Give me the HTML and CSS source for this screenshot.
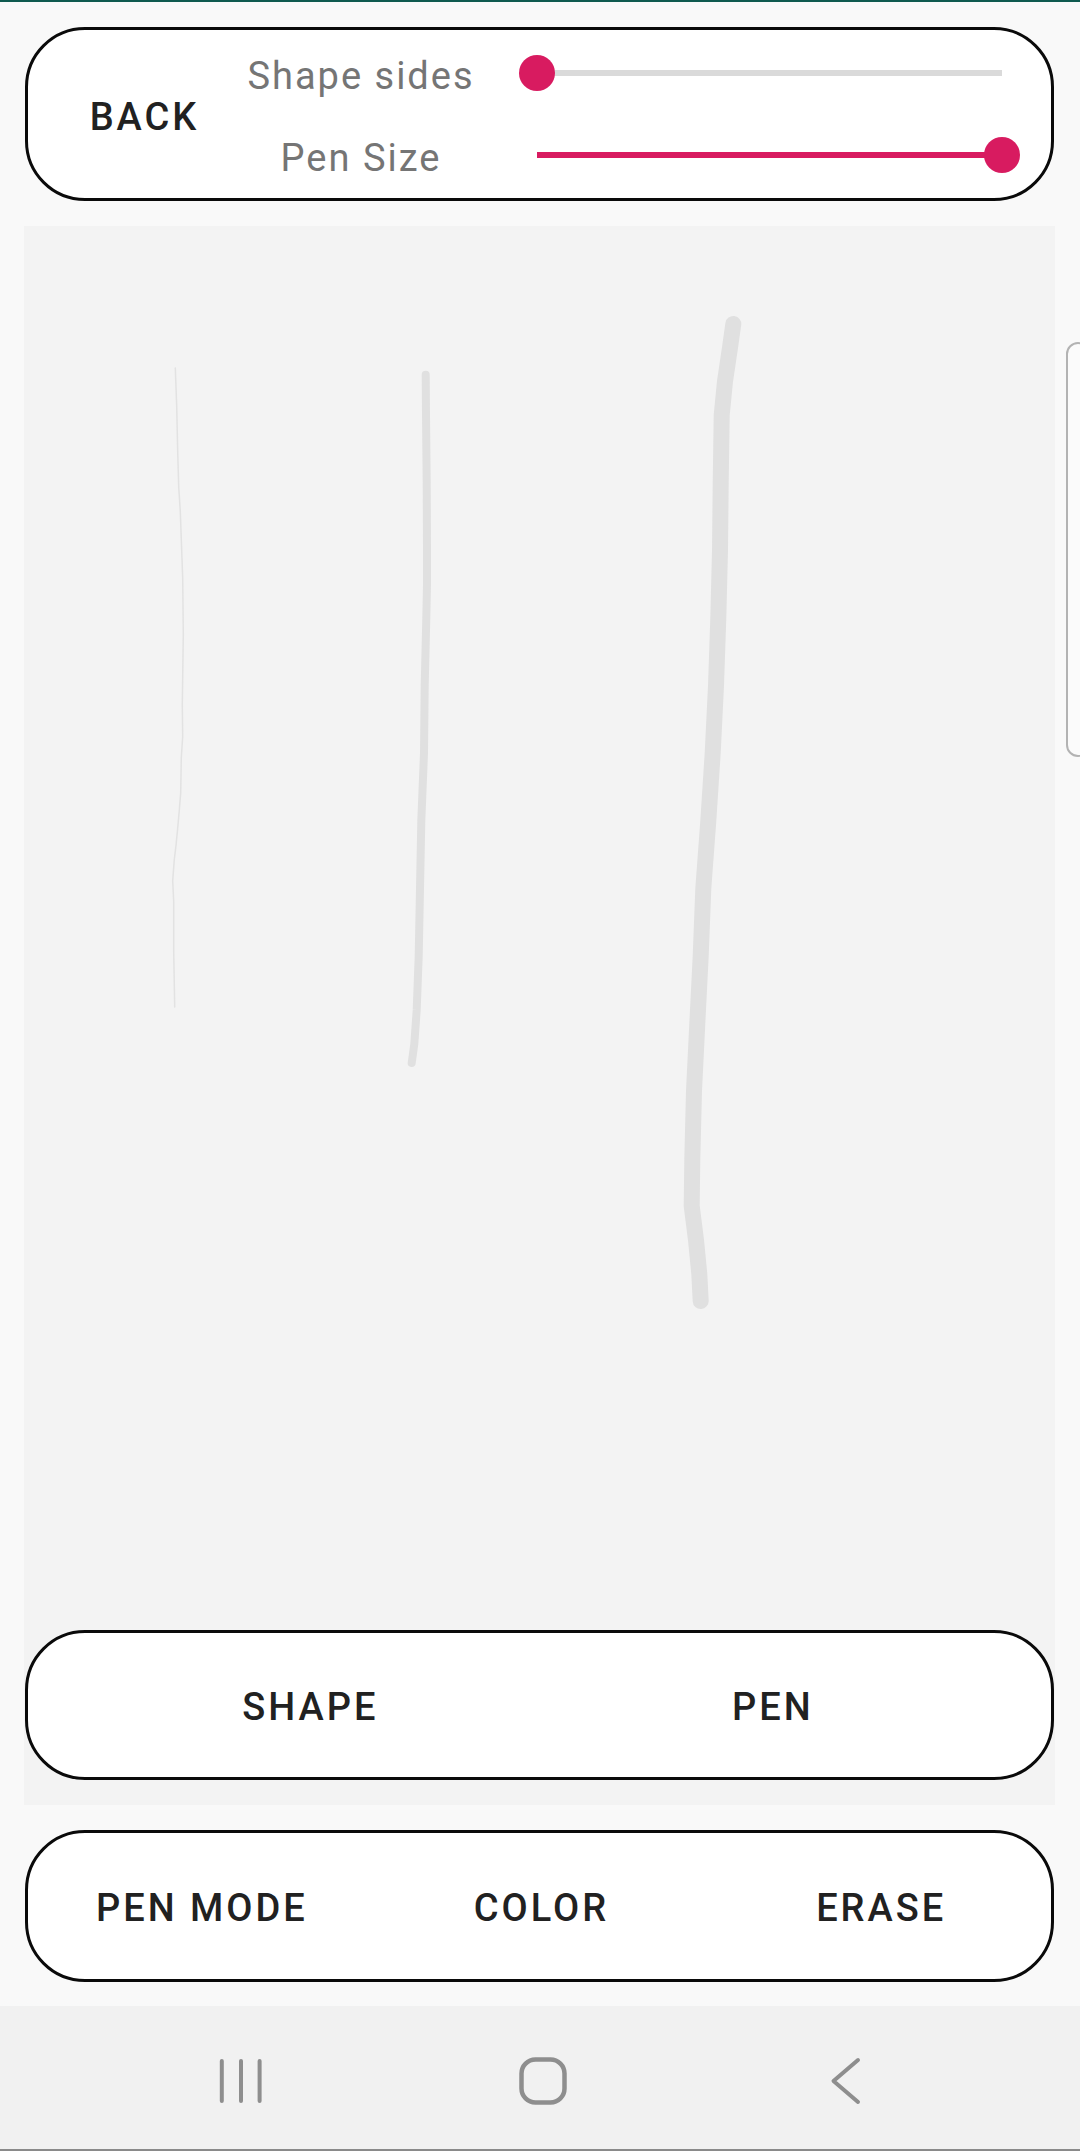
FILE: index.html
```html
<!DOCTYPE html>
<html lang="en">
<head>
<meta charset="utf-8">
<title>Draw</title>
<link rel="stylesheet" href="styles.css">
</head>
<body>
<div class="statusbar"></div>
<main class="app">
  <section class="card top-card">
    <div class="btn back-btn">BACK</div>
    <div class="controls">
      <div class="control-row">
        <div class="label">Shape sides</div>
        <div class="slider">
          <div class="track">
            <div class="fill" style="width:0%"></div>
            <div class="thumb" style="left:0%"></div>
          </div>
        </div>
      </div>
      <div class="control-row">
        <div class="label">Pen Size</div>
        <div class="slider">
          <div class="track">
            <div class="fill" style="width:100%"></div>
            <div class="thumb" style="left:100%"></div>
          </div>
        </div>
      </div>
    </div>
  </section>

  <section class="canvas">
    <svg class="strokes" viewBox="24 226 1031 1579" width="1031" height="1579" aria-hidden="true">
      <polyline class="s1" points="175.3,368 176.7,406 177.7,451.7 178.7,486.8 180.3,511.5 181.3,539.6 182.7,578 183.3,634.5 182.3,704.8 182.7,736.5 181.3,757.6 180.7,792.7 179.3,810.3 177.7,828 176,845.5 174.3,859.5 172.7,880.6 173.7,901.7 173.7,951 174.7,1007"/>
      <polyline class="s2" points="425.7,374.7 426,415 426.7,482.8 427,550.5 427,584 426.3,618 424.7,685.7 424,753 421.3,821 420,888.5 418.7,956 416.7,1010 414.3,1044 411.7,1063"/>
      <polyline class="s3" points="733.3,324 730,347.6 725,381.4 721.7,415 720.7,482.8 720,550.5 718.3,618 716,685.7 712.7,753 708.3,821 703.3,888.5 700.7,956 697.3,1023.7 694,1091 692.3,1159 691.7,1206 696,1240 699.3,1274 700.7,1301"/>
    </svg>
    <div class="card mode-card">
      <div class="btn">SHAPE</div>
      <div class="btn">PEN</div>
    </div>
  </section>

  <section class="card tools-card">
    <div class="btn">PEN MODE</div>
    <div class="btn">COLOR</div>
    <div class="btn">ERASE</div>
  </section>
</main>

<div class="edge-handle"></div>

<nav class="navbar">
  <svg class="nav-icon" viewBox="0 0 60 60" width="60" height="60" aria-hidden="true">
    <line x1="10.8" y1="10" x2="10.8" y2="50"/>
    <line x1="30" y1="10" x2="30" y2="50"/>
    <line x1="48.6" y1="10" x2="48.6" y2="50"/>
  </svg>
  <svg class="nav-icon" viewBox="0 0 60 60" width="60" height="60" aria-hidden="true">
    <rect x="8.5" y="8.5" width="43" height="43" rx="14" ry="14"/>
  </svg>
  <svg class="nav-icon" viewBox="0 0 60 60" width="60" height="60" aria-hidden="true">
    <polyline points="43,9 18.5,30 43,51"/>
  </svg>
</nav>
</body>
</html>
```

FILE: styles.css
```css
* {
  box-sizing: border-box;
}

html, body {
  margin: 0;
  padding: 0;
}

body {
  width: 1080px;
  height: 2151px;
  background: #f9f9f9;
  font-family: Roboto, "Liberation Sans", sans-serif;
  position: relative;
  overflow: hidden;
}

.statusbar {
  height: 2px;
  background: #0f5a4f;
}

.app {
  padding: 25px 25px 0 24px;
  display: flex;
  flex-direction: column;
}

.card {
  background: #ffffff;
  border: 3px solid #0a0a0a;
  border-radius: 60px;
}

.btn {
  font-weight: 500;
  font-size: 38px;
  letter-spacing: 3px;
  color: #212121;
  display: flex;
  align-items: center;
  justify-content: center;
  white-space: nowrap;
}

/* top card */
.top-card {
  margin: 0 1px;
  height: 174px;
  display: flex;
}

.back-btn {
  width: 238px;
  flex: none;
  padding: 6px 5px 0 0;
}

.controls {
  display: flex;
  flex-direction: column;
  gap: 22px;
  padding: 13px 0;
}

.control-row {
  height: 60px;
  display: flex;
  align-items: center;
}

.label {
  width: 190px;
  flex: none;
  display: flex;
  justify-content: center;
  white-space: nowrap;
  font-size: 38px;
  letter-spacing: 2px;
  color: #757575;
  padding-top: 6px;
}

.slider {
  width: 501px;
  margin-left: 63px;
  padding: 0 18px;
  height: 60px;
  display: flex;
  align-items: center;
}

.track {
  position: relative;
  width: 100%;
  height: 6px;
  background: #dadada;
}

.fill {
  height: 100%;
  background: #d81b60;
}

.thumb {
  position: absolute;
  top: 50%;
  width: 36px;
  height: 36px;
  border-radius: 50%;
  background: #d81b60;
  transform: translate(-50%, -50%);
}

/* canvas */
.canvas {
  margin-top: 25px;
  height: 1579px;
  background: #f3f3f3;
  position: relative;
  display: flex;
  flex-direction: column;
  justify-content: flex-end;
  padding: 0 1px 25px;
}

.strokes {
  position: absolute;
  left: 0;
  top: 0;
}

.strokes polyline {
  fill: none;
  stroke: #e0e0e0;
  stroke-linecap: round;
  stroke-linejoin: round;
}

.strokes .s1 {
  stroke-width: 1.5;
  stroke: #e2e2e2;
}

.strokes .s2 {
  stroke-width: 8;
}

.strokes .s3 {
  stroke-width: 16;
}

.mode-card {
  position: relative;
  height: 150px;
  display: grid;
  grid-template-columns: 1fr 1fr;
  padding: 0 47px 0 51px;
}

.mode-card .btn {
  padding-top: 3px;
}

/* bottom tools */
.tools-card {
  margin: 25px 1px 0;
  height: 152px;
  display: grid;
  grid-template-columns: 1fr 1fr 1fr;
  padding: 0 0 0 4px;
}

.tools-card .btn {
  padding-top: 4px;
}

/* edge panel handle */
.edge-handle {
  position: absolute;
  left: 1066px;
  top: 342px;
  width: 24px;
  height: 415px;
  background: #fbfbfb;
  border: 2px solid #b3b3b3;
  border-radius: 12px;
}

/* navigation bar */
.navbar {
  margin-top: 24px;
  height: 145px;
  background: #f1f1f1;
  border-bottom: 2px solid #8a8a8a;
  display: flex;
  justify-content: center;
  align-items: center;
  gap: 242px;
  padding: 7px 0 0 6px;
}

.nav-icon {
  display: block;
  fill: none;
  stroke: #8e8e8e;
  stroke-width: 4;
  stroke-linecap: round;
  stroke-linejoin: round;
}

.nav-icon rect {
  stroke-width: 4.5;
}
```
